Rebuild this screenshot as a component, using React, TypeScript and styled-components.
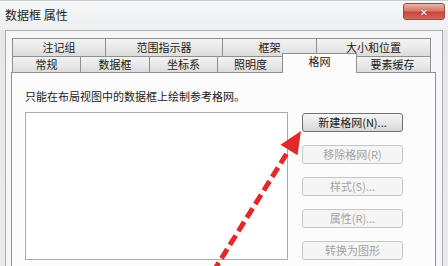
import styled, { createGlobalStyle } from 'styled-components'

const GlobalStyle = createGlobalStyle`
  html, body {
    margin: 0;
    padding: 0;
    width: 448px;
    height: 266px;
    overflow: hidden;
    background: #eceef0;
  }
  body {
    font-family: "Noto Sans CJK SC", "DejaVu Sans", sans-serif;
  }
`

// タブのデータ(幅は実測)
const topTabs = [
  { label: '注记组', width: 94 },
  { label: '范围指示器', width: 118 },
  { label: '框架', width: 95 },
  { label: '大小和位置', width: 115 },
]

const bottomTabs = [
  { label: '常规', width: 69 },
  { label: '数据框', width: 70 },
  { label: '坐标系', width: 69 },
  { label: '照明度', width: 67 },
  { label: '格网', width: 71, active: true },
  { label: '要素缓存', width: 77 },
]

const buttons = [
  { label: '新建格网(N)...', enabled: true },
  { label: '移除格网(R)' },
  { label: '样式(S)...' },
  { label: '属性(R)...' },
  { label: '转换为图形' },
]

export default function App() {
  return (
    <>
      <GlobalStyle />
      <Frame>
        <TitleBar>
          <Title>数据框 属性</Title>
          <CloseButton>✕</CloseButton>
        </TitleBar>
        <Client>
          <TabRow>
            {topTabs.map((t) => (
              <Tab key={t.label} $width={t.width} $tall>
                {t.label}
              </Tab>
            ))}
          </TabRow>
          <TabRow>
            {bottomTabs.map((t) => (
              <Tab key={t.label} $width={t.width} $active={t.active}>
                {t.label}
              </Tab>
            ))}
          </TabRow>
          <Panel>
            <Hint>只能在布局视图中的数据框上绘制参考格网。</Hint>
            <GridArea>
              <ListBox />
              <ButtonColumn>
                {buttons.map((b) => (
                  <DialogButton key={b.label} $enabled={b.enabled}>
                    {b.label}
                  </DialogButton>
                ))}
              </ButtonColumn>
            </GridArea>
          </Panel>
        </Client>
        <Arrow viewBox="0 0 448 266" width={448} height={266}>
          <line
            x1={213}
            y1={272}
            x2={289}
            y2={150}
            stroke="#e1292b"
            strokeWidth={5}
            strokeDasharray="11 5"
          />
          <polygon points="301,131 280.5,144.7 297.5,155.3" fill="#e1292b" />
        </Arrow>
      </Frame>
    </>
  )
}

const Frame = styled.div`
  position: relative;
  width: 448px;
  height: 266px;
  display: flex;
  flex-direction: column;
  padding: 0 5px;
  box-sizing: border-box;
  background: linear-gradient(#f4f5f6, #e6e8ea 30px, #e9ebed);
`

const TitleBar = styled.div`
  height: 30px;
  display: flex;
  justify-content: space-between;
  align-items: flex-start;
  margin: 0 -5px;
  padding: 0 3px 0 5px;
  background: linear-gradient(#f8f8f9, #eceef0);
  border-top: 1px solid #c9cdd2;
  box-sizing: border-box;
`

const Title = styled.div`
  font-size: 12px;
  color: #1e1e1e;
  line-height: 14px;
  margin-top: 7px;
`

const CloseButton = styled.div`
  width: 42px;
  height: 17px;
  margin-top: 2px;
  box-sizing: border-box;
  border: 1px solid #9a4a40;
  border-radius: 3px;
  background: linear-gradient(#eab3a9, #d9786a 45%, #c8463a 55%, #d2685a);
  color: #fff;
  font-size: 10px;
  font-weight: bold;
  display: flex;
  align-items: center;
  justify-content: center;
  text-shadow: 0 0 2px #7a2018;
`

const Client = styled.div`
  flex: 1;
  display: flex;
  flex-direction: column;
  background: #f7f7f7;
  border: 1px solid #a9adb3;
  border-bottom: none;
  padding: 7px 6px 0 5px;
  box-sizing: border-box;
  min-height: 0;
`

const TabRow = styled.div`
  display: flex;
  margin-left: 2px;
  flex-shrink: 0;
`

const Tab = styled.div<{ $width: number; $tall?: boolean; $active?: boolean }>`
  width: ${(p) => p.$width + (p.$active ? 4 : 0)}px;
  height: ${(p) => (p.$active ? 20 : p.$tall ? 18 : 16)}px;
  margin: ${(p) => (p.$active ? '-3px -2px -1px' : '0')};
  box-sizing: border-box;
  border: 1px solid #8f8f8f;
  border-left-width: 1px;
  border-bottom: ${(p) => (p.$active ? 'none' : '0')};
  margin-left: ${(p) => (p.$active ? '-2px' : '-1px')};
  background: ${(p) =>
    p.$active ? '#fcfcfc' : 'linear-gradient(#f3f3f3, #e9e9e9 50%, #dcdcdc)'};
  position: relative;
  z-index: ${(p) => (p.$active ? 2 : 1)};
  font-size: 11px;
  color: #1a1a1a;
  line-height: ${(p) => (p.$active ? 14 : p.$tall ? 17 : 15)}px;
  text-align: center;
  white-space: nowrap;
`

const Panel = styled.div`
  flex: 1;
  display: flex;
  flex-direction: column;
  background: #fcfcfc;
  border: 1px solid #8f8f8f;
  border-bottom: none;
  padding: 16px 13px 0;
  min-height: 0;
`

const Hint = styled.div`
  font-size: 11px;
  line-height: 14px;
  color: #1a1a1a;
`

const GridArea = styled.div`
  display: flex;
  gap: 14px;
  margin-top: 9px;
`

const ListBox = styled.div`
  width: 263px;
  height: 148px;
  box-sizing: border-box;
  border: 1px solid #aaaaaa;
  background: #fff;
`

const ButtonColumn = styled.div`
  display: flex;
  flex-direction: column;
  gap: 13px;
  padding-top: 1px;
`

const DialogButton = styled.div<{ $enabled?: boolean }>`
  width: 101px;
  height: 19px;
  box-sizing: border-box;
  border: 1px solid ${(p) => (p.$enabled ? '#707070' : '#c6c6c6')};
  border-radius: 3px;
  background: ${(p) =>
    p.$enabled ? 'linear-gradient(#f6f6f6, #e8e8e8 50%, #d8d8d8)' : '#f5f5f5'};
  color: ${(p) => (p.$enabled ? '#1a1a1a' : '#a3a3a3')};
  font-size: 11px;
  line-height: 17px;
  text-align: center;
  white-space: nowrap;
`

const Arrow = styled.svg`
  position: absolute;
  left: 0;
  top: 0;
  pointer-events: none;
  z-index: 5;
`
